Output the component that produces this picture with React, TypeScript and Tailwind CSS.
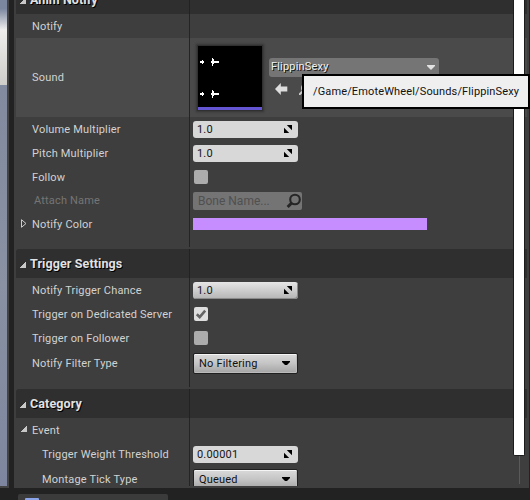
import type { ReactNode } from "react";

function Row({ label, h, children, className = "", pad = "pl-4", arrow }: {
  label: string; h: string; children?: ReactNode; className?: string; pad?: string; arrow?: ReactNode;
}) {
  return (
    <div className={`flex shrink-0 ${h} ${className}`}>
      <div className={`relative flex w-[174px] shrink-0 items-center border-r border-[#242424] ${pad}`}>
        {arrow}
        <span className="mt-px whitespace-nowrap">{label}</span>
      </div>
      <div className="flex grow items-center pl-[3px]">{children}</div>
    </div>
  );
}

function Corner({ className = "" }: { className?: string }) {
  return (
    <svg width="7" height="7" viewBox="0 0 7 7" className={className} shapeRendering="crispEdges">
      <path d="M7 0V7H0Z" fill="#c8c8c8" />
    </svg>
  );
}

function Header({ title }: { title: string }) {
  return (
    <div className="flex h-[29px] shrink-0 rounded-tl-[3px] bg-[#2f2f2f]">
      <div className="flex w-[174px] shrink-0 items-center border-r border-[#222] pl-[3px] text-[12.5px] font-bold tracking-[0.1px] text-[#e2e2e2]">
        <Corner className="mt-[2px] mr-1" />
        <span className="whitespace-nowrap [text-shadow:1px_1px_0_#000]">{title}</span>
      </div>
    </div>
  );
}

function Gap() {
  return (
    <div className="h-[13px] shrink-0">
      <div className="h-[11px] w-[174px] border-r border-[#242424]" />
    </div>
  );
}

function NumberBox({ value, shaded = false }: { value: string; shaded?: boolean }) {
  return (
    <div className={`flex h-[17px] w-[105px] items-center justify-between rounded-[3px] pr-[6px] pl-1 text-[#151515] ${shaded ? "bg-linear-to-b from-[#e6e6e6] to-[#b4b4b4] shadow-[inset_-1px_-1px_0_#8a8a8a]" : "bg-[#d8d8d8]"}`}>
      <span className="mt-px">{value}</span>
      <svg width="8" height="8" viewBox="0 0 8 8">
        <path d="M2.8 0H8V5.2ZM0 2.8V8H5.2Z" fill="#000" />
      </svg>
    </div>
  );
}

function Check({ on = false }: { on?: boolean }) {
  return (
    <div className={`ml-px flex size-[14px] items-center justify-center rounded-[2px] ${on ? "bg-[#dedede]" : "bg-[#acacac]"}`}>
      {on && (
        <svg width="12" height="12" viewBox="0 0 12 12" fill="none">
          <path d="M1.8 6.2L4.7 9L10.2 2.7" stroke="#646464" strokeWidth="2.6" />
        </svg>
      )}
    </div>
  );
}

function Dropdown({ value }: { value: string }) {
  return (
    <div className="flex h-[21px] w-[105px] shrink-0 items-center justify-between rounded-[2px] border border-[#202020] bg-linear-to-b from-[#dadada] via-[#c4c4c4] to-[#a4a4a4] pr-[7px] pl-[5px] text-[#111] shadow-[inset_0_1px_0_#f5f5f5,inset_-1px_-1px_0_#bbb]">
      <span className="mt-px">{value}</span>
      <svg width="8" height="4" viewBox="0 0 8 4"><path d="M0 0H8V1L5 4H3L0 1Z" fill="#000" /></svg>
    </div>
  );
}

function Thumbnail() {
  return (
    <div className="ml-1 flex h-[66px] w-[66px] shrink-0 flex-col border border-[#303030] bg-black shadow-[0_0_2px_1px_#353535]">
      <svg width="64" height="61" viewBox="0 0 64 61" shapeRendering="crispEdges" fill="#fff">
        <path d="M2 15H4V14H5V15H6V17H5V18H4V17H2ZM13 15H14V12H15V13H16V15H21V17H16V18H15V20H14V17H13Z" />
        <path d="M2 47H4V46H5V47H6V49H5V50H4V49H2ZM13 47H14V44H15V45H16V47H21V49H16V50H15V52H14V49H13Z" />
      </svg>
      <div className="h-[3px] bg-[#6455d2]" />
    </div>
  );
}

export default function App() {
  return (
    <div className="relative flex h-[500px] w-[530px] flex-col overflow-hidden bg-[#222] font-['Roboto',sans-serif] text-[11px] leading-[14px] tracking-[0.18px] text-[#d2d2d2]">
      <div className="flex h-[488px] shrink-0">
        <div className="flex w-[9px] shrink-0 flex-col border-r-2 border-b-2 border-[#444]">
          <div className="h-[85px] shrink-0 bg-linear-to-b from-[#7b879f] from-10% via-[#efeeec] via-35% to-[#cfcdca]" />
          <div className="grow bg-linear-to-b from-[#828a9f] via-[#8991a3] to-[#7d869e]" />
        </div>
        <div className="w-[5px] shrink-0 bg-[#222]" />
        <div className="relative flex w-[515px] shrink-0 flex-col overflow-hidden bg-[#3e3e3e] pr-[2px] pl-[2px]">
          <div className="-mt-[15px] flex shrink-0 flex-col">
            <Header title="Anim Notify" />
          </div>
          <Row label="Notify" h="h-6" />
          <Row label="Sound" h="h-[79px]" className="bg-[#4a4a4a]">
            <Thumbnail />
            <div className="mt-5 ml-[6px] flex h-[39px] flex-col self-start">
              <div className="flex h-[19px] w-[170px] shrink-0 items-center justify-between rounded-[3px] bg-[#757575] pr-1 pl-[2px] text-[#f0f0f0]">
                <span className="-mt-[2px] [text-shadow:1px_1px_0_#111]">FlippinSexy</span>
                <svg width="8" height="5" viewBox="0 0 8 5"><path d="M0 0H8V1L4 5L0 1Z" fill="#e2e2e2" /></svg>
              </div>
              <div className="flex items-center pt-[6px] pl-[6px]">
                <svg width="13" height="12" viewBox="0 0 13 12"><path d="M0 6L5.8 0V3.6H12.3V8.4H5.8V12Z" fill="#dedede" /></svg>
                <svg className="ml-[11px]" width="12" height="12" viewBox="0 0 12 12" fill="none"><circle cx="7" cy="5" r="4" stroke="#ccc" strokeWidth="2" /><path d="M4 8L0 12" stroke="#ccc" strokeWidth="2" /></svg>
              </div>
            </div>
          </Row>
          <Row label="Volume Multiplier" h="h-6"><NumberBox value="1.0" /></Row>
          <Row label="Pitch Multiplier" h="h-6"><NumberBox value="1.0" /></Row>
          <Row label="Follow" h="h-6"><Check /></Row>
          <Row label="Attach Name" h="h-6" pad="pl-[18px] text-[#757575] pb-[2px]">
            <div className="flex h-[18px] w-[109px] items-center justify-between rounded-[2px] bg-[#747474] pl-[5px] text-[12px] tracking-normal text-[#505050]">
              <span>Bone Name...</span>
              <svg width="16" height="16" viewBox="0 0 16 16" fill="none"><circle cx="9" cy="6.5" r="4.8" stroke="#262626" strokeWidth="2.1" /><path d="M5.6 10L1.6 14" stroke="#262626" strokeWidth="3" /></svg>
            </div>
          </Row>
          <Row label="Notify Color" h="h-[23px]" arrow={
            <svg className="absolute top-[6px] left-[5px]" width="6" height="9" viewBox="0 0 6 9"><path d="M.5 .7V8.3L5 4.5Z" fill="none" stroke="#ccc" /></svg>
          }><div className="-mt-px h-3 w-[234px] bg-[#c58dff]" /></Row>
          <Gap />
          <Header title="Trigger Settings" />
          <Row label="Notify Trigger Chance" h="h-6"><NumberBox value="1.0" shaded /></Row>
          <Row label="Trigger on Dedicated Server" h="h-6"><Check on /></Row>
          <Row label="Trigger on Follower" h="h-6"><Check /></Row>
          <Row label="Notify Filter Type" h="h-[26px]"><Dropdown value="No Filtering" /></Row>
          <Gap />
          <Header title="Category" />
          <Row label="Event" h="h-6" arrow={<Corner className="absolute top-[7px] left-1" />} />
          <Row label="Trigger Weight Threshold" h="h-6" pad="pl-[26px]"><NumberBox value="0.00001" /></Row>
          <div className="h-[20px] shrink-0 overflow-hidden">
            <Row label="Montage Tick Type" h="h-[26px]" pad="pl-[26px]"><Dropdown value="Queued" /></Row>
          </div>
          <div className="absolute top-0 right-1 flex h-[484px] w-3 flex-col items-center">
            <div className="h-[456px] w-3 shrink-0 rounded-b-[2px] border-x border-b border-[#1c1c1c] bg-white" />
            <div className="w-px grow bg-[#5a5a5a]" />
          </div>
        </div>
        <div className="w-px bg-[#222]" />
      </div>
      <div className="mt-[6px] ml-[18px] flex h-[6px] w-[150px] rounded-t-[2px] bg-[#3b3b3b] pt-1 pl-[7px]">
        <div className="h-[2px] w-[14px] rounded-t-[1px] bg-[#8ca5ea]" />
      </div>
      <div className="absolute top-[74px] left-[302px] flex h-[35px] w-[228px] items-center border-2 border-black bg-[#efefef] pl-[9px] tracking-[0.14px] text-[#111]">
        <span className="whitespace-nowrap">/Game/EmoteWheel/Sounds/FlippinSexy</span>
      </div>
    </div>
  );
}
